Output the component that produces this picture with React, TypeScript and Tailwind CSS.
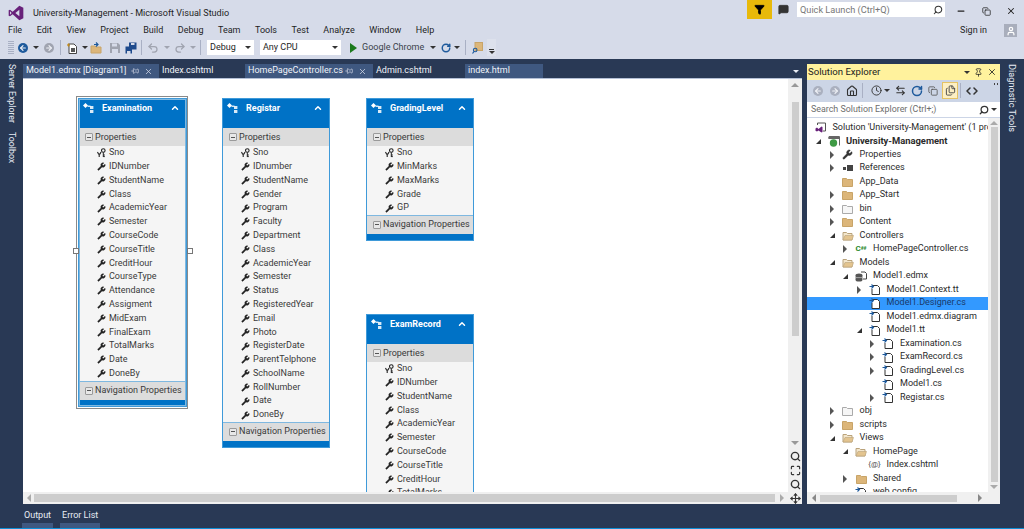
import { ChevronUp, Wrench, Minus, X, Search, RotateCw, Home, Clock, ArrowLeftRight, Copy, Files, Code, Filter, Pin, Undo2, Redo2, ArrowLeft, ArrowRight, Maximize, Move, User, MessageSquare } from 'lucide-react'

const font = { fontFamily: 'Roboto, "Open Sans", sans-serif' }

interface Entity {
  name: string
  x: number
  y: number
  w: number
  fields: string[]
  nav?: boolean
  selected?: boolean
}

// x, y are measured from the top-left of the white designer canvas
const entities: Entity[] = [
  { name: 'Examination', x: 55, y: 19, w: 109, selected: true, nav: true, fields: ['IDNumber', 'StudentName', 'Class', 'AcademicYear', 'Semester', 'CourseCode', 'CourseTitle', 'CreditHour', 'CourseType', 'Attendance', 'Assigment', 'MidExam', 'FinalExam', 'TotalMarks', 'Date', 'DoneBy'] },
  { name: 'Registar', x: 199, y: 19, w: 108, nav: true, fields: ['IDnumber', 'StudentName', 'Gender', 'Program', 'Faculty', 'Department', 'Class', 'AcademicYear', 'Semester', 'Status', 'RegisteredYear', 'Email', 'Photo', 'RegisterDate', 'ParentTelphone', 'SchoolName', 'RollNumber', 'Date', 'DoneBy'] },
  { name: 'GradingLevel', x: 343, y: 19, w: 108, nav: true, fields: ['MinMarks', 'MaxMarks', 'Grade', 'GP'] },
  { name: 'ExamRecord', x: 343, y: 235, w: 108, fields: ['IDNumber', 'StudentName', 'Class', 'AcademicYear', 'Semester', 'CourseCode', 'CourseTitle', 'CreditHour', 'TotalMarks'] },
]

function MinusBox() {
  return (
    <span className="w-[8px] h-[8px] border border-[#9a9a9a] rounded-[1px] bg-[#e8e8e8] flex items-center justify-center shrink-0">
      <span className="w-[4px] h-px bg-[#555]" />
    </span>
  )
}

function EntityIcon() {
  return (
    <svg width="11" height="10" viewBox="0 0 11 10" className="shrink-0">
      <path d="M0 2.5 L2.5 0 L5 2.5 L2.5 5Z" fill="#fff" />
      <rect x="4.5" y="2.5" width="3" height="1.5" fill="#fff" opacity=".8" />
      <rect x="7" y="3" width="3.4" height="3" fill="#fff" opacity=".85" />
      <rect x="7" y="7" width="3.4" height="3" fill="#fff" opacity=".85" />
    </svg>
  )
}

function KeyIcon() {
  return (
    <svg width="9" height="10" viewBox="0 0 9 10" className="shrink-0">
      <circle cx="6.3" cy="2.5" r="1.8" fill="none" stroke="#222" strokeWidth="1.1" />
      <path d="M6.3 4.3 V9 M6.3 7 H7.8 M6.3 8.6 H7.8" stroke="#222" strokeWidth="1" fill="none" />
      <path d="M0.5 4 L1.5 6 L3 6 L4 4 M2.2 6 V9" stroke="#222" strokeWidth="1.1" fill="none" />
    </svg>
  )
}

function EntityCard({ e }: { e: Entity }) {
  return (
    <div style={{ left: e.x, top: e.y, width: e.w }} className="absolute bg-[#0072c6] border border-[#3f9ad9] z-10">
      {e.selected && (
        <>
          <div className="absolute -top-[3px] -left-[3px] -right-[2px] -bottom-[3px] border border-[#8a8a8a] pointer-events-none" />
          <div className="absolute inset-0 border border-[#7fb8e0] pointer-events-none" />
        </>
      )}
      <div className="h-[29px] flex items-start pt-[4px] pl-[4px] text-white text-[9px] font-bold">
        <EntityIcon />
        <span className="ml-[8px] leading-[10px] flex-1 truncate">{e.name}</span>
        <ChevronUp size={10} strokeWidth={3.5} className="mr-[6px]" />
      </div>
      <div className="bg-[#dcdcdc] h-[18px] flex items-center gap-[2px] pl-[6px] text-[9px] text-[#3a3a3a] leading-none">
        <MinusBox />
        <span>Properties</span>
      </div>
      <div className="bg-[#f5f5f5] pl-[18px] text-[9px] text-[#3a3a3a]">
        <div className="h-[13.8px] flex items-center gap-[3px]">
          <KeyIcon />
          <span>Sno</span>
        </div>
        {e.fields.map((f) => (
          <div key={f} className="h-[13.8px] flex items-center gap-[3px]">
            <Wrench size={9} strokeWidth={1} className="text-[#222] fill-[#222] shrink-0" />
            <span className="whitespace-nowrap">{f}</span>
          </div>
        ))}
      </div>
      {e.nav && (
        <>
          <div className="border-t border-[#7fb8e0] bg-[#dcdcdc] h-[19px] flex items-center gap-[2px] pl-[6px] text-[9px] text-[#3a3a3a] whitespace-nowrap">
            <MinusBox />
            <span>Navigation Properties</span>
          </div>
          <div className="h-[6px]" />
        </>
      )}
    </div>
  )
}

type IconName = 'sln' | 'proj' | 'wrench' | 'refs' | 'folder' | 'folderOpen' | 'ghost' | 'cs' | 'edmx' | 'file' | 'razor'

interface TreeRow {
  label: string
  depth: number
  arrow?: 'open' | 'closed'
  icon: IconName
  bold?: boolean
  selected?: boolean
}

const tree: TreeRow[] = [
  { label: "Solution 'University-Management' (1 project)", depth: -1, icon: 'sln' },
  { label: 'University-Management', depth: 0, arrow: 'open', icon: 'proj', bold: true },
  { label: 'Properties', depth: 1, arrow: 'closed', icon: 'wrench' },
  { label: 'References', depth: 1, arrow: 'closed', icon: 'refs' },
  { label: 'App_Data', depth: 1, icon: 'folder' },
  { label: 'App_Start', depth: 1, arrow: 'closed', icon: 'folder' },
  { label: 'bin', depth: 1, arrow: 'closed', icon: 'ghost' },
  { label: 'Content', depth: 1, arrow: 'closed', icon: 'folder' },
  { label: 'Controllers', depth: 1, arrow: 'open', icon: 'folderOpen' },
  { label: 'HomePageController.cs', depth: 2, arrow: 'closed', icon: 'cs' },
  { label: 'Models', depth: 1, arrow: 'open', icon: 'folderOpen' },
  { label: 'Model1.edmx', depth: 2, arrow: 'open', icon: 'edmx' },
  { label: 'Model1.Context.tt', depth: 3, arrow: 'closed', icon: 'file' },
  { label: 'Model1.Designer.cs', depth: 3, icon: 'file', selected: true },
  { label: 'Model1.edmx.diagram', depth: 3, icon: 'file' },
  { label: 'Model1.tt', depth: 3, arrow: 'open', icon: 'file' },
  { label: 'Examination.cs', depth: 4, arrow: 'closed', icon: 'file' },
  { label: 'ExamRecord.cs', depth: 4, arrow: 'closed', icon: 'file' },
  { label: 'GradingLevel.cs', depth: 4, arrow: 'closed', icon: 'file' },
  { label: 'Model1.cs', depth: 4, icon: 'file' },
  { label: 'Registar.cs', depth: 4, arrow: 'closed', icon: 'file' },
  { label: 'obj', depth: 1, arrow: 'closed', icon: 'ghost' },
  { label: 'scripts', depth: 1, arrow: 'closed', icon: 'folder' },
  { label: 'Views', depth: 1, arrow: 'open', icon: 'folderOpen' },
  { label: 'HomePage', depth: 2, arrow: 'open', icon: 'folderOpen' },
  { label: 'Index.cshtml', depth: 3, icon: 'razor' },
  { label: 'Shared', depth: 2, arrow: 'closed', icon: 'folder' },
  { label: 'web.config', depth: 2, icon: 'file' },
]

function FolderIcon({ fill = '#dcb67a', stroke = '#c8a468' }: { fill?: string; stroke?: string }) {
  return (
    <svg width="11" height="10" viewBox="0 0 11 10">
      <path d="M0.5 1.5 H4.5 L5.5 2.5 H10.5 V9.5 H0.5Z" fill={fill} stroke={stroke} />
    </svg>
  )
}

function FolderOpenIcon() {
  return (
    <svg width="12" height="10" viewBox="0 0 12 10">
      <path d="M1 9 V1.5 H4.5 L5.5 2.5 H10 V9Z" fill="#f3e6cc" stroke="#b9a27a" />
      <path d="M1 9 L3 4.5 H11.5 L10 9Z" fill="#e3c48f" stroke="#b9a27a" strokeWidth=".6" />
    </svg>
  )
}

function DocIcon() {
  return (
    <svg width="12" height="11" viewBox="0 0 12 11">
      <path d="M4 1.5 H8.5 L10.5 3.5 V10.5 H3 V5" fill="#fff" stroke="#333" />
      <path d="M0.5 2.5 H4 M2.5 0.5 L4.5 2.5 L2.5 4.5" fill="none" stroke="#1e5a9c" strokeWidth="1.1" />
    </svg>
  )
}

function TreeIcon({ icon }: { icon: IconName }) {
  switch (icon) {
    case 'sln':
      return (
        <svg width="11" height="11" viewBox="0 0 11 11">
          <path d="M2.5 3 V1 H10.5 V9 H8" fill="none" stroke="#555" />
          <path d="M0.5 6.5 L2 5.5 L3.5 7 L6.5 4.5 L7.5 5 V10 L6.5 10.5 L3.5 8.5 L2 9.5 L0.5 8.8Z" fill="#68217a" />
        </svg>
      )
    case 'proj':
      return (
        <svg width="12" height="11" viewBox="0 0 12 11">
          <path d="M1 2.5 V0.5 H11.5 V9.5" fill="none" stroke="#666" />
          <rect x="0.5" y="1" width="10.5" height="2" fill="#666" />
          <circle cx="5.5" cy="7" r="3.7" fill="#3f9a45" />
        </svg>
      )
    case 'wrench':
      return <Wrench size={11} strokeWidth={1} className="text-[#333] fill-[#333]" />
    case 'refs':
      return (
        <span className="flex items-center gap-px">
          <span className="w-[3px] h-[3px] bg-[#444]" />
          <span className="w-[6px] h-[6px] bg-[#444]" />
        </span>
      )
    case 'folder':
      return <FolderIcon />
    case 'folderOpen':
      return <FolderOpenIcon />
    case 'ghost':
      return <FolderIcon fill="#f6f6f6" stroke="#aaa" />
    case 'cs':
      return (
        <span className="flex items-start leading-none font-bold text-[#2b8a2b] text-[8px]">
          C<span className="text-[5px] mt-px">##</span>
        </span>
      )
    case 'edmx':
      return (
        <svg width="12" height="11" viewBox="0 0 12 11">
          <path d="M6 1 H10 L11.5 2.5 V8 H8" fill="#fff" stroke="#444" />
          <ellipse cx="4" cy="4" rx="3.4" ry="1.6" fill="#555" />
          <rect x="0.6" y="4" width="6.8" height="5" fill="#555" />
          <ellipse cx="4" cy="9" rx="3.4" ry="1.6" fill="#555" />
          <path d="M0.8 6.6 H7.2" stroke="#ddd" strokeWidth=".6" />
        </svg>
      )
    case 'razor':
      return <span className="text-[8px] text-[#555] leading-none whitespace-nowrap">{'{@}'}</span>
    default:
      return <DocIcon />
  }
}

function Tree() {
  return (
    <div className="flex-1 min-h-0 flex bg-white overflow-hidden">
      <div className="flex-1 min-w-0 overflow-hidden text-[9.05px] text-[#2b2b2b] pt-[3px]">
        {tree.map((r) => (
          <div key={r.label} className={`h-[13.5px] whitespace-nowrap ${r.selected ? 'bg-[#3399ff] text-[#1a3a6a]' : ''}`}>
            <div style={{ marginLeft: 9 + r.depth * 13.5 }} className="h-full flex items-center">
              <span className="w-[10px] flex items-center shrink-0">
                {r.arrow === 'open' && <span className="w-0 h-0 border-l-[5px] border-l-transparent border-b-[5px] border-b-[#333]" />}
                {r.arrow === 'closed' && <span className="w-0 h-0 border-y-[4px] border-y-transparent border-l-[4px] border-l-[#555]" />}
              </span>
              <span className="w-[16px] flex items-center justify-center shrink-0">
                <TreeIcon icon={r.icon} />
              </span>
              <span className={`ml-[4px] ${r.bold ? 'font-bold text-[9.4px]' : ''}`}>{r.label}</span>
            </div>
          </div>
        ))}
      </div>
      <div className="w-[12px] bg-[#f0f0f0] flex flex-col items-center shrink-0 pb-[3px]">
        <span className="mt-[3px] w-0 h-0 border-x-[4px] border-x-transparent border-b-[4px] border-b-[#aaa]" />
        <div className="mt-[2px] w-[7px] flex-1 bg-[#cdcdcd]" />
        <span className="mt-[3px] w-0 h-0 border-x-[4px] border-x-transparent border-t-[4px] border-t-[#aaa]" />
      </div>
    </div>
  )
}

function Tab({ label, width, active, pin }: { label: string; width: string; active?: boolean; pin?: boolean }) {
  return (
    <div className={`${width} h-full flex items-center pl-[3px] text-[9px] whitespace-nowrap text-[#f0f3f8] ${active ? 'bg-[#3f5880]' : ''}`}>
      <span>{label}</span>
      {pin && (
        <span className="ml-auto flex items-center gap-[5px] mr-[6px]">
          <Pin size={8} className="rotate-90 text-[#d6dbe9]" />
          <X size={9} className="text-[#d6dbe9]" />
        </span>
      )}
    </div>
  )
}

function Sep({ className = '' }: { className?: string }) {
  return <span className={`w-px h-[15px] bg-[#a9b0c4] shrink-0 ${className}`} />
}

function Caret({ className = '' }: { className?: string }) {
  return <span className={`w-0 h-0 border-x-[3px] border-x-transparent border-t-[3px] border-t-[#333] shrink-0 ${className}`} />
}

function ArrowUp() {
  return <span className="block w-0 h-0 border-x-[4px] border-x-transparent border-b-[4px] border-b-[#999]" />
}

function NavButton({ dir, color, className = '' }: { dir: 'back' | 'forward'; color: string; className?: string }) {
  const Icon = dir === 'back' ? ArrowLeft : ArrowRight
  return (
    <span style={{ backgroundColor: color }} className={`w-[10px] h-[10px] rounded-full flex items-center justify-center shrink-0 ${className}`}>
      <Icon size={8} strokeWidth={3.5} className="text-[#f0f2f7]" />
    </span>
  )
}

export default function App() {
  return (
    <div style={font} className="w-[1024px] h-[529px] overflow-hidden flex flex-col bg-[#293955] text-[#1e1e1e] border-b border-[#0e8fd6]">
      {/* chrome */}
      <div className="h-[59px] bg-[#d6dbe9] shrink-0 flex flex-col">
        <div className="h-[22px] flex items-start shrink-0">
          <svg width="16" height="16" viewBox="0 0 24 24" className="ml-[8px] mt-[5px] shrink-0">
            <path d="M17 1 L23 4 V20 L17 23 L7 14 L3 17 L1 16 V8 L3 7 L7 10Z M17 7 L11 12 L17 17Z M3 9.5 V14.5 L5.5 12Z" fill="#68217a" fillRule="evenodd" />
          </svg>
          <span className="ml-[9px] mt-[6px] text-[9.05px] leading-[14px]">University-Management - Microsoft Visual Studio</span>
          <div className="ml-auto flex items-start">
            <div className="w-[25px] h-[19px] bg-[#e8b90a] flex items-center justify-center">
              <Filter size={11} className="fill-black text-black" />
            </div>
            <MessageSquare size={11} className="ml-[6px] mr-[8px] mt-[4px] text-[#333] fill-[#333]" />
            <div className="w-[148px] h-[15px] mt-[2px] bg-white flex items-center pl-[3px] pr-[2px] text-[9.2px] text-[#777]">
              <span className="flex-1">Quick Launch (Ctrl+Q)</span>
              <Search size={10} strokeWidth={2.5} className="text-[#333] -scale-x-100" />
            </div>
            <div className="w-[79px] flex items-center justify-between pl-[11px] pr-[8px] mt-[6px] text-[#222]">
              <Minus size={10} strokeWidth={3} />
              <Copy size={9} strokeWidth={2} />
              <X size={10} strokeWidth={2.5} />
            </div>
          </div>
        </div>
        <div className="h-[17px] flex items-center pl-[8px] text-[9px] shrink-0">
          <div className="flex gap-[14.5px]">
            {['File', 'Edit', 'View', 'Project', 'Build', 'Debug', 'Team', 'Tools', 'Test', 'Analyze', 'Window', 'Help'].map((m) => (
              <span key={m}>{m}</span>
            ))}
          </div>
          <span className="ml-auto mr-[17px]">Sign in</span>
          <span className="w-[13px] h-[13px] mr-[7px] bg-[#a9aebc] flex items-center justify-center">
            <User size={10} strokeWidth={3} className="text-white" />
          </span>
        </div>
        <div className="h-[17px] flex items-center pl-[8px] text-[9px] shrink-0">
          <span className="w-[6px] h-[13px] shrink-0 bg-[repeating-linear-gradient(0deg,#a9b0c4_0,#a9b0c4_1px,transparent_1px,transparent_2px)]" />
          <NavButton dir="back" color="#1e5a9c" className="ml-[4px]" />
          <Caret className="ml-[5px]" />
          <NavButton dir="forward" color="#a0a4b0" className="ml-[5px]" />
          <Sep className="ml-[6px]" />
          <svg width="12" height="12" viewBox="0 0 12 12" className="ml-[5px] shrink-0">
            <path d="M3 2 H8 L10.5 4.5 V11.5 H3Z" fill="#fff" stroke="#444" />
            <path d="M1 3 L2.5 1 L4 3 L2.5 5Z" fill="#c08a20" />
            <rect x="5" y="6" width="4" height="4" fill="#555" />
          </svg>
          <Caret className="ml-[4px]" />
          <svg width="13" height="12" viewBox="0 0 13 12" className="ml-[2px] shrink-0">
            <path d="M1 11 V4 H5 L6 5 H11 V11Z" fill="#dcb67a" stroke="#c8a468" />
            <path d="M4 2.5 H8 M6 0.5 L8 2.5 L6 4.5" stroke="#1e5a9c" strokeWidth="1.2" fill="none" />
          </svg>
          <svg width="12" height="12" viewBox="0 0 12 12" className="ml-[6px] shrink-0">
            <path d="M1 1 H9 L11 3 V11 H1Z M3 1.5 V4.5 H8 V1.5Z M3 7 V11 H9 V7Z" fill="#a0a4b0" fillRule="evenodd" />
          </svg>
          <svg width="12" height="12" viewBox="0 0 12 12" className="ml-[4px] shrink-0">
            <path d="M4 0.5 H11.5 V7.5 H4Z M6 1 V3 H9.5 V1Z" fill="#1e4a8c" fillRule="evenodd" />
            <path d="M0.5 4.5 H7 V11.5 H0.5Z M2 9 V11.5 H5.5 V9Z" fill="#1e4a8c" fillRule="evenodd" />
          </svg>
          <Sep className="ml-[4px]" />
          <Undo2 size={12} strokeWidth={2.5} className="ml-[5px] text-[#a0a4b0] shrink-0" />
          <Caret className="ml-[5px] !border-t-[#a0a4b0]" />
          <Redo2 size={12} strokeWidth={2.5} className="ml-[4px] text-[#a0a4b0] shrink-0" />
          <Caret className="ml-[4px] !border-t-[#a0a4b0]" />
          <Sep className="ml-[4px]" />
          <div className="w-[47px] h-[15px] ml-[6px] bg-white flex items-center pl-[3px] pr-[3px] justify-between shrink-0">
            <span>Debug</span>
            <Caret />
          </div>
          <div className="w-[81px] h-[15px] ml-[6px] bg-white flex items-center pl-[3px] pr-[3px] justify-between shrink-0">
            <span>Any CPU</span>
            <Caret />
          </div>
          <span className="ml-[9px] w-0 h-0 border-y-[5px] border-y-transparent border-l-[7px] border-l-[#1c7a1c] shrink-0" />
          <span className="ml-[5px] text-[#3a3f4a] whitespace-nowrap">Google Chrome</span>
          <Caret className="ml-[6px]" />
          <RotateCw size={10} strokeWidth={3.5} className="ml-[5px] text-[#1e5a9c] shrink-0" />
          <Caret className="ml-[3px]" />
          <Sep className="ml-[5px]" />
          <svg width="11" height="12" viewBox="0 0 11 12" className="ml-[6px] shrink-0">
            <rect x="3" y="0.5" width="7.5" height="8" fill="#dcb67a" stroke="#c8a468" />
            <circle cx="3.2" cy="8" r="1.8" fill="none" stroke="#1e5a9c" strokeWidth="1.1" />
            <path d="M2 9.5 L0.5 11.5" stroke="#1e5a9c" strokeWidth="1.2" />
          </svg>
          <span className="ml-[4px] w-[9px] h-[17px] bg-[#dde1ec] flex flex-col items-center justify-end pb-[2px] gap-px shrink-0">
            <span className="w-[5px] h-px bg-[#333]" />
            <Caret />
          </span>
        </div>
      </div>

      {/* workspace */}
      <div className="flex-1 min-h-0 flex pt-[5px]">
        <div className="w-[23px] shrink-0 flex flex-col items-center text-[#e8ecf4] text-[8.8px] gap-[9px]">
          <span className="[writing-mode:vertical-rl] whitespace-nowrap">Server Explorer</span>
          <span className="[writing-mode:vertical-rl]">Toolbox</span>
        </div>

        <div className="w-[779px] shrink-0 flex flex-col">
          <div className="h-[14px] flex shrink-0 items-stretch relative">
            <Tab label="Model1.edmx [Diagram1]" width="w-[136px]" active pin />
            <Tab label="Index.cshtml" width="w-[86px]" />
            <Tab label="HomePageController.cs" width="w-[128px]" active pin />
            <Tab label="Admin.cshtml" width="w-[92px]" />
            <Tab label="index.html" width="w-[78px]" active />
            <Caret className="absolute right-[3px] top-[6px] !border-t-[#e8ecf4]" />
          </div>
          <div className="h-px bg-[#b4c0d6] shrink-0" />
          <div className="flex-1 min-h-0 bg-white flex flex-col">
            <div className="flex-1 min-h-0 flex">
              <div className="flex-1 relative overflow-hidden">
                {entities.map((e) => (
                  <EntityCard key={e.name} e={e} />
                ))}
                <span className="absolute left-[50px] top-[169px] w-[6px] h-[6px] border border-[#777] bg-white z-20" />
                <span className="absolute left-[164px] top-[169px] w-[6px] h-[6px] border border-[#777] bg-white z-20" />
              </div>
              <div className="w-[14px] bg-[#f0f0f0] flex flex-col items-center shrink-0">
                <span className="mt-[4px]"><ArrowUp /></span>
                <div className="mt-[15px] w-[7px] h-[234px] bg-[#cdcdcd]" />
                <span className="mt-auto w-0 h-0 border-x-[4px] border-x-transparent border-t-[4px] border-t-[#999]" />
                <div className="mb-[2px] mt-[6px] flex flex-col items-center gap-[3px] text-[#333]">
                  <Search size={11} strokeWidth={3} />
                  <Maximize size={11} strokeWidth={2.5} />
                  <Search size={11} strokeWidth={3} />
                </div>
              </div>
            </div>
            <div className="h-[12px] bg-[#f0f0f0] flex items-center shrink-0">
              <span className="ml-[4px] w-0 h-0 border-y-[4px] border-y-transparent border-r-[4px] border-r-[#aaa]" />
              <div className="ml-[3px] w-[741px] h-[8px] bg-[#cdcdcd]" />
              <span className="ml-[5px] w-0 h-0 border-y-[4px] border-y-transparent border-l-[4px] border-l-[#aaa]" />
              <span className="ml-auto w-[14px] flex justify-center text-[#333]">
                <Move size={11} strokeWidth={2.5} />
              </span>
            </div>
          </div>
        </div>

        <div className="w-[5px] shrink-0" />

        <div className="w-[193px] shrink-0 flex flex-col bg-[#ccd5e6]">
          <div className="h-[16px] bg-[#fff29d] flex items-center pl-[1px] pr-[3px] text-[9.6px] text-[#222] shrink-0">
            <span className="flex-1">Solution Explorer</span>
            <span className="flex items-center gap-[4px]">
              <Caret />
              <Pin size={9} />
              <X size={10} />
            </span>
          </div>
          <div className="h-[21px] flex items-center shrink-0 relative">
            <NavButton dir="back" color="#aab0bf" className="ml-[6px]" />
            <NavButton dir="forward" color="#aab0bf" className="ml-[7px]" />
            <Home size={12} strokeWidth={2.2} className="ml-[6px] text-[#333] shrink-0" />
            <Sep className="ml-[4px]" />
            <Clock size={11} className="ml-[8px] text-[#333] shrink-0" />
            <Caret className="ml-[2px]" />
            <ArrowLeftRight size={11} strokeWidth={2.5} className="ml-[5px] text-[#333] shrink-0" />
            <RotateCw size={12} strokeWidth={3} className="ml-[5px] text-[#1e5a9c] shrink-0" />
            <Copy size={10} className="ml-[5px] text-[#555] shrink-0" />
            <span className="ml-[4px] w-[16px] h-[17px] bg-[#fdf0c4] border border-[#e5c365] flex items-center justify-center shrink-0">
              <Files size={11} className="text-[#444]" />
            </span>
            <Sep className="ml-[2px]" />
            <Code size={12} strokeWidth={3} className="ml-[5px] text-[#333] shrink-0" />
            <span className="absolute right-[2px] top-[3px] w-[4px] h-[2px] border-x border-[#444]" />
          </div>
          <div className="h-px shrink-0" />
          <div className="h-[15px] bg-white flex items-center pl-[4px] pr-[3px] text-[8.9px] text-[#6d6d6d] shrink-0">
            <span className="flex-1">Search Solution Explorer (Ctrl+;)</span>
            <Search size={10} strokeWidth={3} className="text-[#333] -scale-x-100 mr-[2px]" />
            <Caret />
          </div>
          <div className="h-px shrink-0" />
          <Tree />
          <div className="h-[12px] bg-[#f0f0f0] flex items-center shrink-0">
            <span className="ml-[5px] w-0 h-0 border-y-[4px] border-y-transparent border-r-[4px] border-r-[#888]" />
            <div className="ml-[4px] w-[137px] h-[7px] bg-[#cdcdcd]" />
            <span className="ml-[21px] w-0 h-0 border-y-[4px] border-y-transparent border-l-[4px] border-l-[#888]" />
          </div>
        </div>

        <div className="flex-1 flex justify-center text-[#e8ecf4] text-[9.2px]">
          <span className="[writing-mode:vertical-rl] whitespace-nowrap">Diagnostic Tools</span>
        </div>
      </div>

      {/* bottom tabs */}
      <div className="h-[24px] shrink-0 flex gap-[7px] pl-[22px] text-[9px] text-[#e8ecf4]">
        <div className="flex flex-col items-stretch">
          <span className="h-[18px] flex items-end px-[2px]">Output</span>
          <span className="mt-auto h-[5px] bg-[#3f5880]" />
        </div>
        <div className="flex flex-col items-stretch">
          <span className="h-[18px] flex items-end px-[2px]">Error List</span>
          <span className="mt-auto h-[5px] bg-[#3f5880]" />
        </div>
      </div>
    </div>
  )
}
